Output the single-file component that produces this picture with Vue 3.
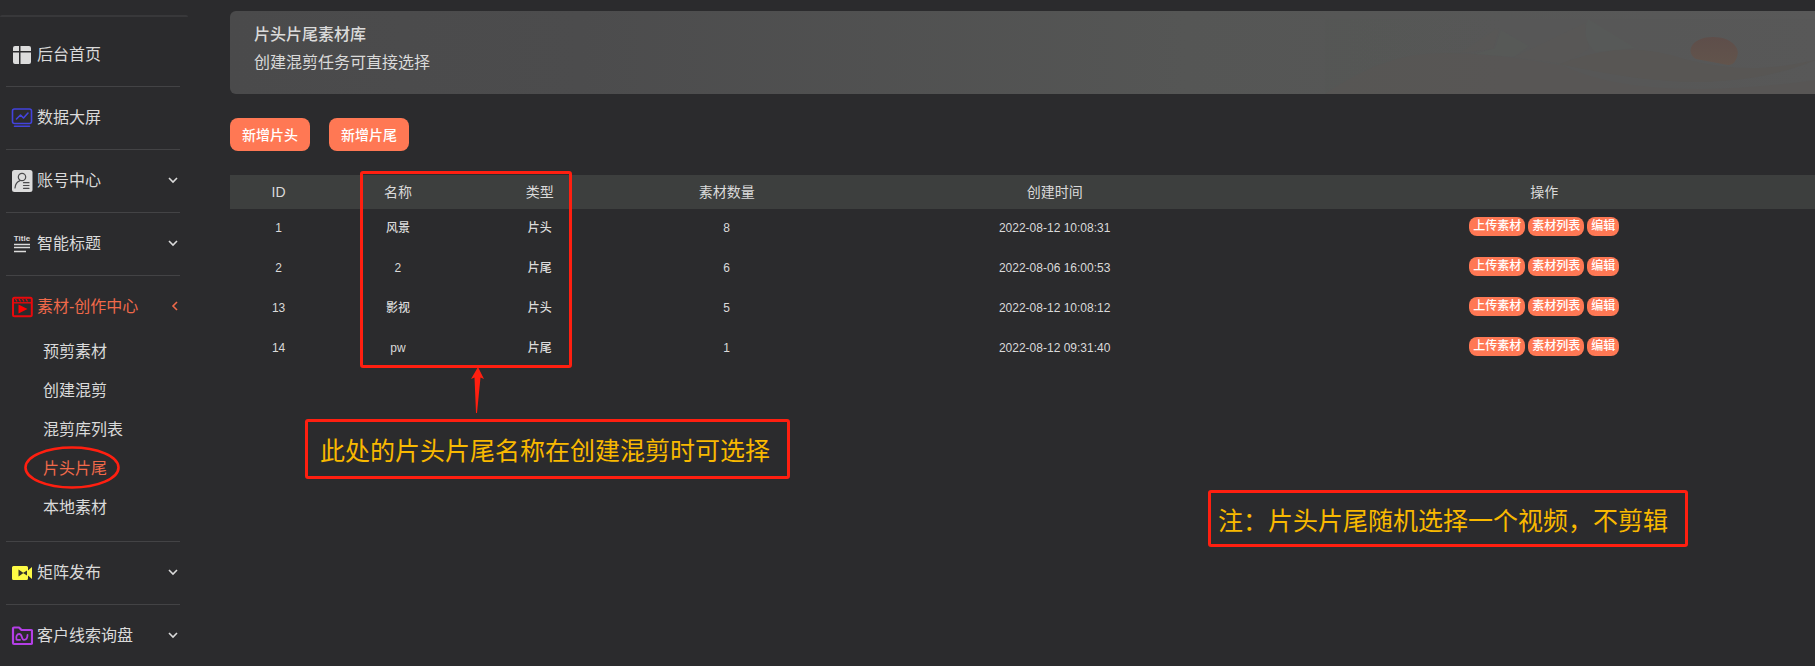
<script setup>
const menu = [
  { id: 'home', label: '后台首页' },
  { id: 'data', label: '数据大屏' },
  { id: 'account', label: '账号中心', arrow: true },
  { id: 'title', label: '智能标题', arrow: true },
  {
    id: 'video',
    label: '素材-创作中心',
    arrow: true,
    active: true,
    children: ['预剪素材', '创建混剪', '混剪库列表', '片头片尾', '本地素材'],
  },
  { id: 'camera', label: '矩阵发布', arrow: true },
  { id: 'folder', label: '客户线索询盘', arrow: true },
]

const current = '片头片尾'
const columns = ['ID', '名称', '类型', '素材数量', '创建时间', '操作']
const rows = [
  { id: 1, name: '风景', type: '片头', count: 8, time: '2022-08-12 10:08:31' },
  { id: 2, name: '2', type: '片尾', count: 6, time: '2022-08-06 16:00:53' },
  { id: 13, name: '影视', type: '片头', count: 5, time: '2022-08-12 10:08:12' },
  { id: 14, name: 'pw', type: '片尾', count: 1, time: '2022-08-12 09:31:40' },
]
const actions = ['上传素材', '素材列表', '编辑']
</script>

<template>
  <div class="page">
    <nav class="sidebar">
      <ul class="menu">
        <li v-for="item in menu" :key="item.id" class="group">
          <button type="button" class="entry" :class="{ active: item.active }">
            <svg class="icon" viewBox="0 0 22 22" aria-hidden="true">
              <g v-if="item.id === 'home'" fill="#dcdcdc">
                <path d="M4 2h4v5H2V4a2 2 0 0 1 2-2zM9.500 2H18a2 2 0 0 1 2 2v3H9.500zM2 8.500h6V20H4a2 2 0 0 1-2-2zM9.500 8.500H20V18a2 2 0 0 1-2 2H9.500z" />
              </g>
              <g v-else-if="item.id === 'data'" fill="none" stroke="#4343dc" stroke-width="1.600" stroke-linecap="round" stroke-linejoin="round">
                <rect x="1.500" y="2" width="19" height="14.500" rx="2" />
                <path d="M5.500 12l4-4 3 3 4.500-5M3.500 19.300h15" />
              </g>
              <g v-else-if="item.id === 'account'">
                <rect x="1" y="0" width="20.500" height="22" rx="2.500" fill="#dcdcdc" />
                <g fill="none" stroke="#4a4a4c" stroke-width="1.200" stroke-linecap="round">
                  <circle cx="11" cy="7" r="3.700" />
                  <path d="M4 18c.3-4 2-6.300 5-7.400M12.500 12.700h5.500M12.500 15.500h5.500M12.500 18.300h5.500" />
                </g>
              </g>
              <g v-else-if="item.id === 'title'">
                <text x="11" y="8" text-anchor="middle" class="title-glyph" fill="#dcdcdc">Title</text>
                <path d="M3 11.500h16M3 14.500h16M3 18.500h12" stroke="#dcdcdc" stroke-width="1.500" />
              </g>
              <g v-else-if="item.id === 'video'">
                <rect x="2" y="1.800" width="18.800" height="18.400" rx="1.500" fill="none" stroke="#e9090c" stroke-width="2" />
                <path d="M2 6.800h19" stroke="#e9090c" stroke-width="1.400" />
                <path d="M4.500 3l1.500 2.500M8 3l1.500 2.500M11.500 3L13 5.500M15 3l1.500 2.500" stroke="#e9090c" stroke-width="1.300" />
                <path d="M7.500 8.500v9l9-4.500z" fill="#ff0000" />
              </g>
              <g v-else-if="item.id === 'camera'">
                <path d="M2.500 4h13A1.500 1.500 0 0 1 17 5.500v3L21 5v12l-4-3.500v3a1.500 1.500 0 0 1-1.500 1.500h-13A1.500 1.500 0 0 1 1 16.500v-11A1.500 1.500 0 0 1 2.500 4z" fill="#fdfa45" />
                <path d="M7.500 7.500v7l5-3.500zM12 11l4-2.500v5z" fill="#35352c" />
              </g>
              <g v-else fill="none" stroke="#b43fe6" stroke-width="2.200" stroke-linejoin="round" stroke-linecap="round">
                <path d="M2 18V3.500a1 1 0 0 1 1-1h5L10.500 5H20a1 1 0 0 1 1 1v12a1 1 0 0 1-1 1H3a1 1 0 0 1-1-1z" />
                <path d="M5.500 14.500c-.8-3 .5-5.500 2.700-5.500 3.500 0 2 5.800 4.800 5.800 2.500 0 3.500-2.300 3.500-4.800M6 14.800h3" stroke-width="1.800" />
              </g>
            </svg>
            <span class="label">{{ item.label }}</span>
            <svg v-if="item.arrow" class="chevron" viewBox="0 0 12 12" aria-hidden="true">
              <path :d="item.active ? 'M10 1L6 5L10 9' : 'M2 3l4 4 4-4'" fill="none" stroke="currentColor" stroke-width="1.600" />
            </svg>
          </button>
          <ul v-if="item.children" class="submenu">
            <li v-for="child in item.children" :key="child">
              <a href="#" class="sublink" :class="{ active: child === current }">
                {{ child }}
                <svg v-if="child === current" class="ring" viewBox="0 0 96 43" aria-hidden="true">
                  <ellipse cx="48" cy="21.500" rx="46.500" ry="20" fill="none" stroke="#ff1f10" stroke-width="2.600" />
                </svg>
              </a>
            </li>
          </ul>
        </li>
      </ul>
    </nav>

    <main class="content">
      <header class="banner">
        <svg class="scenery" viewBox="0 0 622 83" aria-hidden="true">
          <defs>
            <linearGradient id="sun" x1="0" y1="0" x2="0" y2="1">
              <stop offset="0" stop-color="#5e4e4a" />
              <stop offset="1" stop-color="#62544c" />
            </linearGradient>
          </defs>
          <g opacity="0.6">
            <path d="M125 83C165 56 200 42 245 42C290 42 330 49 362 54C420 83 520 83 622 68V83z" fill="#595654" />
            <path d="M260 42l36-24 3 2-6 18z" fill="#595756" />
            <path d="M274 43l21-6 6-18 28 16-15 11z" fill="#575a58" />
            <path d="M314 46L385 12l4 26-25 15z" fill="#595756" />
            <path d="M388 8l47 29-39 4c-10-8-13-18-8-33z" fill="#575b59" />
            <path d="M360 53c45-18 85-18 124-5 48 12 86 12 134 0-40 17-76 22-118 23-50 0-95-8-140-18z" fill="#595552" />
          </g>
          <path d="M496 48c-12-8-3-22 17-22 18 0 28 11 24 20-2 6-5 8-9 8z" fill="url(#sun)" />
        </svg>
        <h1>片头片尾素材库</h1>
        <p>创建混剪任务可直接选择</p>
      </header>

      <div class="toolbar">
        <button type="button" class="primary">新增片头</button>
        <button type="button" class="primary">新增片尾</button>
      </div>

      <table class="list">
        <colgroup>
          <col class="c-id" /><col class="c-name" /><col class="c-name" />
          <col class="c-count" /><col class="c-time" /><col />
        </colgroup>
        <thead>
          <tr><th v-for="c in columns" :key="c" scope="col">{{ c }}</th></tr>
        </thead>
        <tbody>
          <tr v-for="r in rows" :key="r.id">
            <td>{{ r.id }}</td>
            <td>{{ r.name }}</td>
            <td>{{ r.type }}</td>
            <td>{{ r.count }}</td>
            <td>{{ r.time }}</td>
            <td class="ops">
              <div class="actions">
                <button v-for="a in actions" :key="a" type="button">{{ a }}</button>
              </div>
            </td>
          </tr>
        </tbody>
      </table>
    </main>

    <div class="frame"></div>
    <svg class="pointer" viewBox="0 0 14 46" aria-hidden="true">
      <path d="M7 0L13 12L9.500 10.500L6 46H5L3.500 10.500L0 12z" fill="#ff1f10" />
    </svg>
    <p class="note note-names">此处的片头片尾名称在创建混剪时可选择</p>
    <p class="note note-random">注：片头片尾随机选择一个视频，不剪辑</p>
  </div>
</template>

<style>
body {
  margin: 0;
  background: #2b2b2d;
}
</style>

<style scoped>
.page {
  position: relative;
  display: flex;
  min-height: 100vh;
  overflow: hidden;
  background: #2b2b2d;
  color: #dadada;
  font-family: "Liberation Sans", "Noto Sans CJK SC", sans-serif;
  font-size: 16px;
}
button {
  border: 0;
  font-family: inherit;
  cursor: pointer;
}
ul {
  margin: 0;
  padding: 0;
  list-style: none;
}
.sidebar {
  flex: none;
  width: 188px;
  padding-top: 15px;
}
.menu {
  border-top: 2px solid #38383a;
  border-radius: 2px;
  padding: 7px 8px 0 6px;
}
.group + .group {
  border-top: 1px solid #434345;
}
.entry {
  display: flex;
  align-items: center;
  width: 100%;
  height: 62px;
  padding: 0 0 0 5px;
  background: none;
  color: inherit;
  font-size: 16px;
  line-height: 22px;
  text-align: left;
}
.icon {
  flex: none;
  width: 22px;
  height: 22px;
  margin-right: 4px;
}
.title-glyph {
  font: bold 8px "Liberation Sans", sans-serif;
}
.label {
  flex: 1;
}
.chevron {
  width: 12px;
  height: 12px;
  margin-right: 1px;
}
.active {
  color: #f0694a;
}
.submenu {
  margin: -6px 0 0;
  padding: 0 0 14px 37px;
}
.sublink {
  position: relative;
  display: inline-block;
  line-height: 39px;
  color: #dadada;
  text-decoration: none;
  vertical-align: top;
}
.sublink.active {
  color: #f0694a;
}
.ring {
  position: absolute;
  top: -3px;
  left: -19px;
  width: 96px;
  height: 43px;
}
.content {
  flex: 1;
  min-width: 0;
  margin: 11px -7px 0 42px;
}
.banner {
  position: relative;
  box-sizing: border-box;
  height: 83px;
  padding: 13px 24px;
  border-radius: 6px;
  overflow: hidden;
  background: linear-gradient(90deg, #4a4a4b 0%, #4c4c4d 22%, #555655 60%, #595959 100%);
}
.scenery {
  position: absolute;
  top: 0;
  right: 0;
  width: 622px;
  height: 83px;
}
.banner h1,
.banner p {
  position: relative;
  margin: 0;
  font-size: 16px;
  line-height: 22px;
}
.banner h1 {
  font-weight: 500;
}
.banner p {
  margin-top: 6px;
}
.toolbar {
  display: flex;
  gap: 19px;
  margin: 24px 0;
}
.primary {
  width: 80px;
  height: 33px;
  padding: 0 0 2px;
  border-radius: 8px;
  background: #ff7854;
  color: #fff;
  font-size: 14px;
  font-weight: 500;
}
.list {
  width: 100%;
  table-layout: fixed;
  border-collapse: collapse;
  text-align: center;
}
.c-id {
  width: 6.1%;
}
.c-name {
  width: 8.9%;
}
.c-count {
  width: 14.6%;
}
.c-time {
  width: 26.6%;
}
.list th {
  height: 34px;
  padding: 0;
  background: #3d3f3e;
  font-size: 14px;
  font-weight: 400;
  line-height: 20px;
}
.list td {
  height: 38px;
  padding: 0 0 2px;
  font-size: 12px;
  font-weight: 500;
  line-height: 18px;
}
.list .ops {
  height: 35px;
  padding-bottom: 5px;
}
.actions {
  display: flex;
  justify-content: center;
  gap: 3px;
}
.actions button {
  height: 19px;
  padding: 0 4px;
  border-radius: 8px;
  background: #ff7854;
  color: #fff;
  font-size: 12px;
  font-weight: 500;
  line-height: 19px;
}
.frame {
  position: absolute;
  top: 171px;
  left: 360px;
  width: 206px;
  height: 191px;
  border: 3px solid #ff1f10;
  border-radius: 3px;
  pointer-events: none;
}
.pointer {
  position: absolute;
  top: 367px;
  left: 471px;
  width: 14px;
  height: 46px;
}
.note {
  position: absolute;
  box-sizing: border-box;
  margin: 0;
  border: 3px solid #ff1f10;
  border-radius: 3px;
  color: #f9b900;
  font-size: 25px;
  white-space: nowrap;
}
.note-names {
  top: 419px;
  left: 305px;
  padding: 4px 17px 0 12px;
  line-height: 50px;
}
.note-random {
  top: 490px;
  left: 1208px;
  padding: 5px 17px 0 7px;
  line-height: 46px;
}
</style>
